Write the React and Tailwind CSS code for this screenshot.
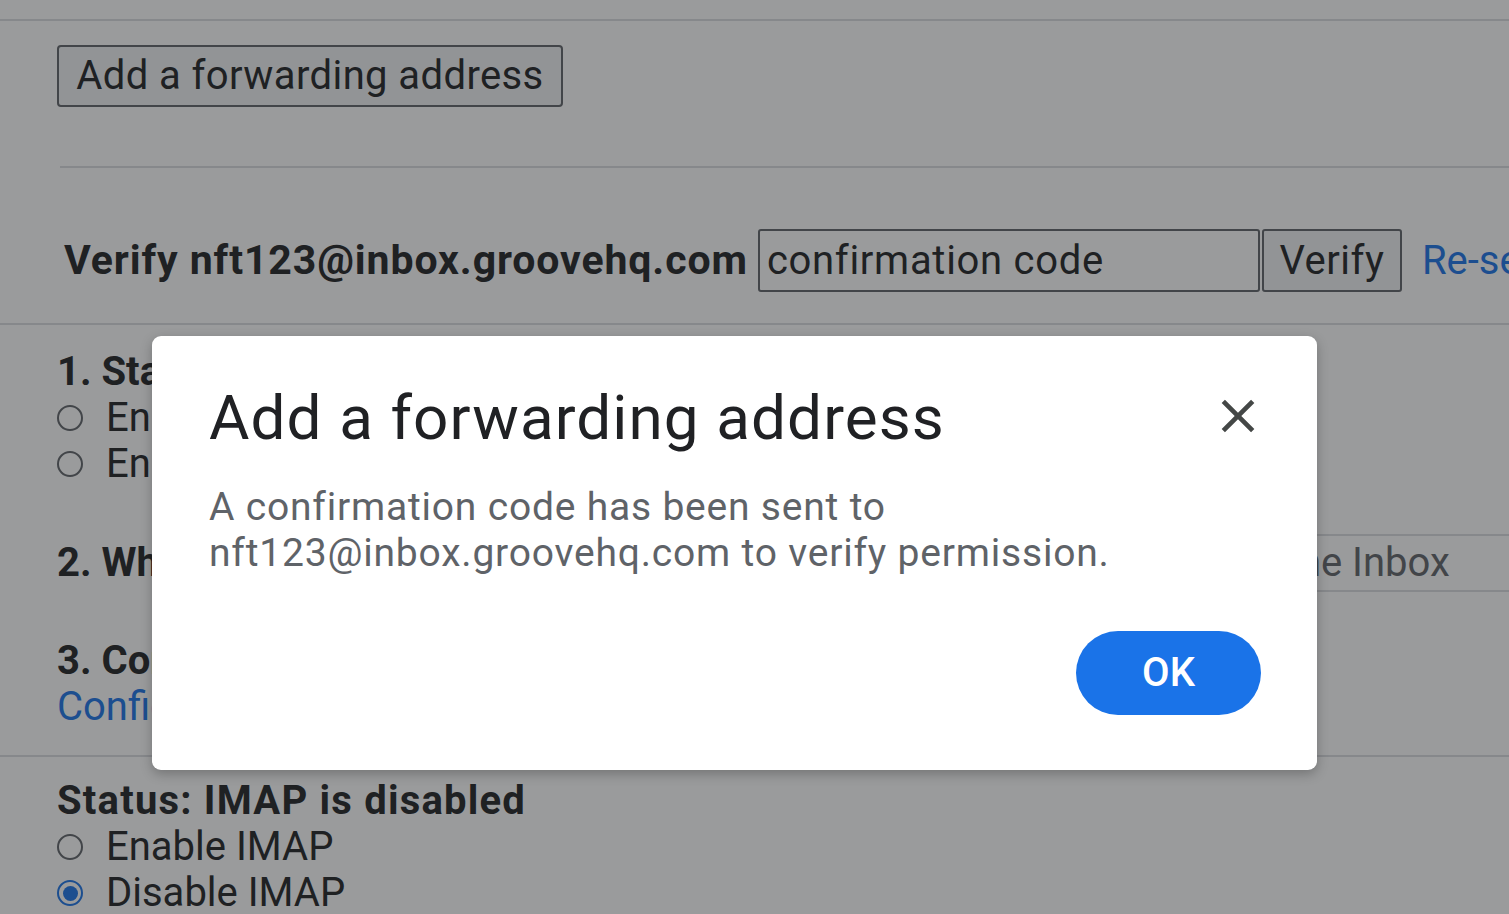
import React from "react";

const font = { fontFamily: "Roboto, 'Open Sans', Arial, sans-serif" };

const Radio = ({ checked }) => (
  <span
    className={`inline-flex items-center justify-center w-[26px] h-[26px] rounded-full border-[2.5px] shrink-0 ${
      checked ? "border-[#1a73e8]" : "border-[#5f6368]"
    }`}
  >
    {checked && <span className="w-[15px] h-[15px] rounded-full bg-[#1a73e8]" />}
  </span>
);

const RadioRow = ({ label, checked }) => (
  <div className="flex items-center h-[46px]">
    <Radio checked={checked} />
    <span className="ml-[23px] text-[40px] text-[#202124]">{label}</span>
  </div>
);

const App = () => {
  return (
    <div className="relative w-[1509px] h-[914px] overflow-hidden bg-white" style={font}>
      {/* settings page behind the dialog */}
      <div className="pt-[19px]">
        <div className="border-t-2 border-[#dadce0] pt-[24px] pl-[57px] h-[147px]">
          <button className="h-[62px] w-[506px] border-2 border-[#5f6368] rounded-[4px] bg-[#f1f3f4] text-[40px] tracking-[0.4px] text-[#202124] leading-none">
            Add a forwarding address
          </button>
        </div>
        <div className="ml-[60px] border-t-2 border-[#dadce0]" />
        <div className="flex items-center h-[155px] pl-[64px] whitespace-nowrap">
          <span className="text-[41px] font-bold tracking-[0.9px] text-[#202124] mt-[30px]">
            Verify nft123@inbox.groovehq.com
          </span>
          <div className="flex items-center mt-[30px] ml-[10px]">
            <div className="w-[502px] h-[63px] border-2 border-[#5f6368] rounded-[3px] bg-white flex items-center pl-[7px] text-[40px] tracking-[0.7px] text-[#202124]">
              confirmation code
            </div>
            <button className="ml-[2px] w-[140px] h-[63px] border-2 border-[#5f6368] rounded-[3px] bg-[#f1f3f4] text-[40px] tracking-[0.5px] text-[#202124]">
              Verify
            </button>
            <span className="ml-[20px] text-[40px] text-[#1a73e8]">Re-send email</span>
          </div>
        </div>
        <div className="border-t-2 border-[#dadce0]" />

        <div className="pl-[57px] pt-[24px] h-[430px]">
          <div className="text-[40px] font-bold text-[#202124] leading-[46px]">1. Status: POP is disabled</div>
          <RadioRow label="Enable POP for all mail" />
          <RadioRow label="Enable POP for mail that arrives from now on" />
          <div className="flex items-center mt-[47px] h-[57px]">
            <span className="w-[843px] shrink-0 text-[40px] font-bold text-[#202124]">
              2. When messages are accessed with POP
            </span>
            <div className="w-[720px] shrink-0 h-[58px] border-y-2 border-[#dadce0] flex items-center pl-[15px] text-[40px] text-[#5f6368] whitespace-nowrap">
              keep Gmail's copy in the Inbox
            </div>
          </div>
          <div className="mt-[47px] text-[40px] font-bold text-[#202124] leading-[46px]">3. Configure your email client</div>
          <div className="text-[40px] text-[#1a73e8] leading-[46px]">Configuration instructions</div>
        </div>
        <div className="border-t-2 border-[#dadce0]" />
        <div className="pl-[57px] pt-[21px]">
          <div className="text-[40px] font-bold tracking-[1.2px] text-[#202124] leading-[46px]">Status: IMAP is disabled</div>
          <RadioRow label="Enable IMAP" />
          <RadioRow label="Disable IMAP" checked />
        </div>
      </div>

      {/* scrim */}
      <div className="absolute inset-0 bg-[#202124]/45" />

      {/* dialog */}
      <div className="absolute left-[152px] top-[336px] w-[1165px] h-[434px] bg-white rounded-[9px] shadow-[0_4px_12px_rgba(0,0,0,0.25)] pl-[57px] pr-[56px] pt-[42px]">
        <div className="flex items-start justify-between">
          <h1 className="text-[62px] tracking-[1.1px] text-[#202124] leading-[80px]">Add a forwarding address</h1>
          <svg width="56" height="56" viewBox="0 0 24 24" className="mt-[10px] -mr-[5px]" fill="#444746">
            <path d="M19 6.41L17.59 5 12 10.59 6.41 5 5 6.41 10.59 12 5 17.59 6.41 19 12 13.41 17.59 19 19 17.59 13.41 12z" />
          </svg>
        </div>
        <p className="mt-[26px] text-[39px] tracking-[0.8px] leading-[46px] text-[#5f6368]">
          A confirmation code has been sent to
          <br />
          nft123@inbox.groovehq.com to verify permission.
        </p>
        <div className="flex justify-end mt-[55px]">
          <button className="w-[185px] h-[84px] rounded-full bg-[#1a73e8] text-white text-[40px] font-medium">
            OK
          </button>
        </div>
      </div>
    </div>
  );
};

export default App;
